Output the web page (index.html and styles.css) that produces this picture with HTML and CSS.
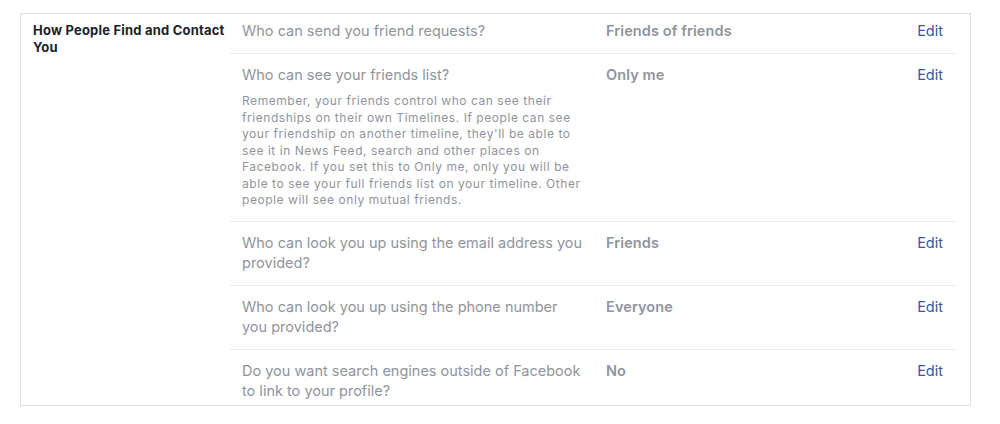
FILE: index.html
```html
<!DOCTYPE html>
<html lang="en">
<head>
    <meta charset="UTF-8">
    <title>Privacy Settings</title>
    <link rel="stylesheet" href="styles.css">
</head>
<body>
<div class="section">
    <div class="section-title">How People Find and Contact You</div>
    <ul class="settings">
        <li class="setting first">
            <div class="question">Who can send you friend requests?</div>
            <div class="value">Friends of friends</div>
            <a class="edit" href="#">Edit</a>
        </li>
        <li class="setting">
            <div class="question">
                Who can see your friends list?
                <p class="note">Remember, your friends control who can see their friendships on their own Timelines. If people can see your friendship on another timeline, they'll be able to see it in News Feed, search and other places on Facebook. If you set this to Only me, only you will be able to see your full friends list on your timeline. Other people will see only mutual friends.</p>
            </div>
            <div class="value">Only me</div>
            <a class="edit" href="#">Edit</a>
        </li>
        <li class="setting">
            <div class="question">Who can look you up using the email address you provided?</div>
            <div class="value">Friends</div>
            <a class="edit" href="#">Edit</a>
        </li>
        <li class="setting">
            <div class="question">Who can look you up using the phone number you provided?</div>
            <div class="value">Everyone</div>
            <a class="edit" href="#">Edit</a>
        </li>
        <li class="setting last">
            <div class="question">Do you want search engines outside of Facebook to link to your profile?</div>
            <div class="value">No</div>
            <a class="edit" href="#">Edit</a>
        </li>
    </ul>
</div>
</body>
</html>
```

FILE: styles.css
```css
body, div, ul, li, p {
    margin: 0;
    padding: 0;
}

ul {
    list-style-type: none;
}

body {
    background: #fff;
    padding: 13px 0 0 20px;
    font-family: Inter, "Liberation Sans", Arial, sans-serif;
    color: #1d2129;
}

.section {
    display: flex;
    width: 951px;
    box-sizing: border-box;
    border: 1px solid #dddfe2;
}

.section-title {
    width: 209px;
    box-sizing: border-box;
    padding: 8px 2px 0 12px;
    font-size: 13px;
    line-height: 17px;
    letter-spacing: 0.2px;
    font-weight: bold;
    color: #1d2129;
}

.settings {
    flex: 1;
    margin-right: 15px;
}

.setting {
    display: grid;
    grid-template-columns: 348px 1fr auto;
    column-gap: 16px;
    padding: 11px 12px 12px;
    border-bottom: 1px solid #e9ebee;
    font-size: 14.5px;
    line-height: 20px;
    color: #90949c;
}

.setting.first {
    padding-top: 7px;
}

.setting.last {
    padding-bottom: 4px;
    border-bottom: none;
}

.question {
    max-width: 341px;
}

.note {
    margin-top: 8px;
    font-size: 12px;
    line-height: 16.5px;
    letter-spacing: 0.55px;
}

.value {
    font-weight: 600;
    letter-spacing: 0.1px;
}

.edit {
    color: #365899;
    text-decoration: none;
}
```
